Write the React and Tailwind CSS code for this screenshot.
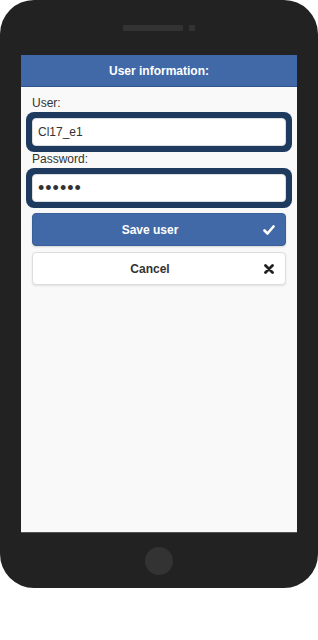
export default function App() {
  return (
    <div className="w-[318px] h-[640px] bg-white" style={{ fontFamily: '"Liberation Sans", Arial, sans-serif' }}>
      {/* phone frame */}
      <div className="w-[318px] h-[588px] bg-[#222222] rounded-[34px] flex flex-col items-center">
        <div className="h-[55px] w-full flex justify-center gap-[6px] pt-[25px]">
          <div className="w-[60px] h-[6px] bg-[#333333] rounded-[1px]" />
          <div className="w-[6px] h-[6px] bg-[#333333] rounded-[1px]" />
        </div>

        {/* screen */}
        <div className="w-[276px] h-[478px] bg-[#f9f9f9] border-b border-[#555555] flex flex-col">
          <div className="h-[32px] bg-[#4269a7] border-b border-[#2f5289] flex items-center justify-center text-white font-bold text-[12px]">
            User information:
          </div>

          <div className="px-[11px] pt-[9px] flex flex-col">
            <label className="text-[12px] leading-[15px] text-[#333333] mb-[1px]">User:</label>
            <div className="-mx-[6px] p-[6px] bg-[#1f3a5f] rounded-[8px]">
              <input
                type="text"
                defaultValue="Cl17_e1"
                readOnly
                className="w-full h-[28px] bg-white border border-[#dddddd] rounded-[4px] px-[5px] text-[12px] text-[#333333] outline-none"
                style={{ fontFamily: '"Liberation Sans", Arial, sans-serif' }}
              />
            </div>

            <label className="text-[12px] leading-[15px] text-[#333333] mb-[1px]">Password:</label>
            <div className="-mx-[6px] p-[6px] bg-[#1f3a5f] rounded-[8px]">
              <input
                type="password"
                defaultValue="123456"
                readOnly
                className="w-full h-[28px] bg-white border border-[#dddddd] rounded-[4px] px-[5px] text-[18px] tracking-[1px] text-[#333333] outline-none"
                style={{ fontFamily: '"Liberation Sans", Arial, sans-serif' }}
              />
            </div>

            {/* save */}
            <button className="mt-[5px] h-[33px] w-full relative bg-[#4269a7] border border-[#3b5f98] rounded-[4px] text-white font-bold text-[12px] pr-[18px] shadow-[0_1px_2px_rgba(0,0,0,0.15)]">
              Save user
              <svg className="absolute right-[10px] top-[11px]" width="12" height="10" viewBox="0 0 12 10">
                <path d="M1.5 5.5 L4.5 8.5 L10.5 1.5" stroke="white" strokeWidth="2.6" fill="none" strokeLinecap="round" strokeLinejoin="round" />
              </svg>
            </button>

            {/* cancel */}
            <button className="mt-[6px] h-[33px] w-full relative bg-white border border-[#dddddd] rounded-[4px] text-[#333333] font-bold text-[12px] pr-[18px] shadow-[0_1px_2px_rgba(0,0,0,0.1)]">
              Cancel
              <svg className="absolute right-[11px] top-[11px]" width="10" height="10" viewBox="0 0 10 10">
                <path d="M1.5 1.5 L8.5 8.5 M8.5 1.5 L1.5 8.5" stroke="#222222" strokeWidth="2.8" fill="none" strokeLinecap="round" />
              </svg>
            </button>
          </div>
        </div>

        <div className="flex-1 w-full flex items-center justify-center">
          <div className="w-[28px] h-[28px] rounded-full bg-[#333333]" />
        </div>
      </div>
    </div>
  );
}
